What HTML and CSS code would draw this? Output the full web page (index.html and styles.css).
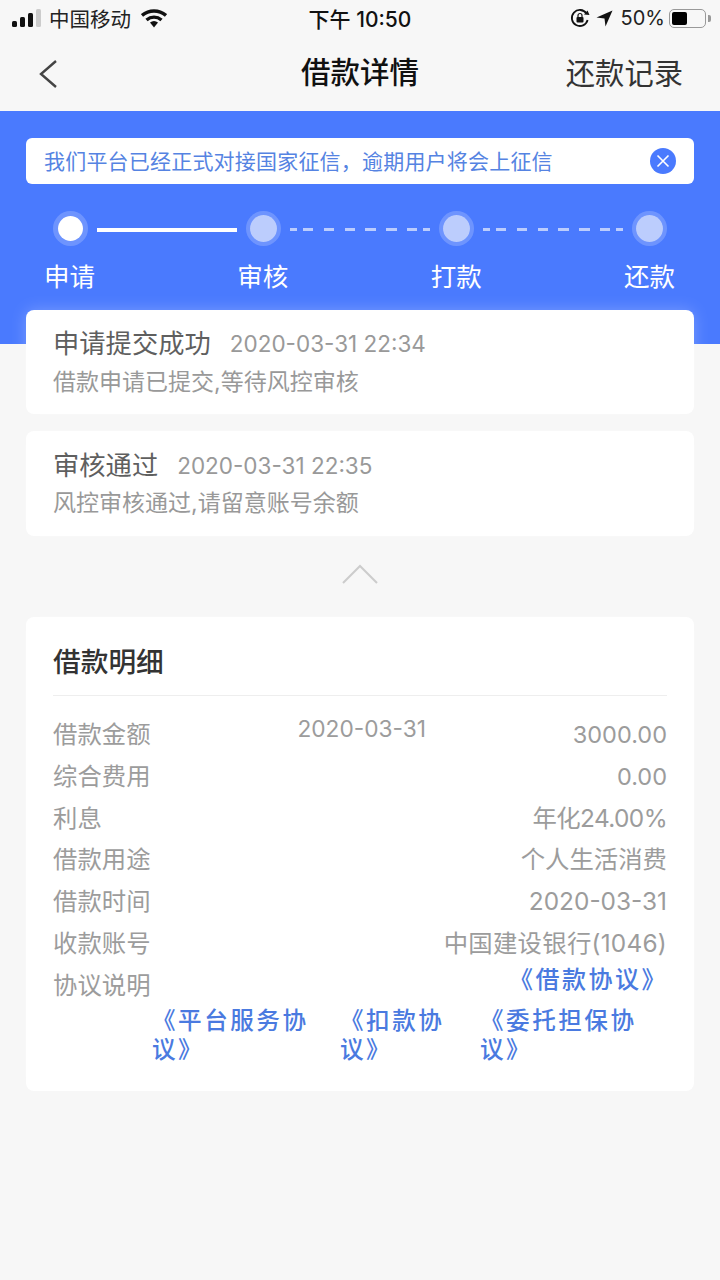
FILE: index.html
```html
<!DOCTYPE html>
<html lang="zh-CN">
<head>
    <meta charset="UTF-8">
    <meta name="viewport" content="width=device-width, initial-scale=1.0">
    <title>借款详情</title>
    <link rel="stylesheet" href="styles.css">
</head>
<body>
    <div class="status-bar">
        <div class="status-left">
            <svg class="signal" width="30" height="18" viewBox="0 0 30 18">
                <rect x="0" y="12" width="5" height="6" rx="1.5" fill="#111"/>
                <rect x="8" y="8" width="5" height="10" rx="1.5" fill="#111"/>
                <rect x="16" y="4" width="5" height="14" rx="1.5" fill="#111"/>
                <rect x="24" y="0" width="5" height="18" rx="1.5" fill="#ccc"/>
            </svg>
            <span class="carrier">中国移动</span>
            <svg class="wifi" width="26" height="19" viewBox="0 0 26 19">
                <path d="M1 6.5 C8 0.5 18 0.5 25 6.5" fill="none" stroke="#111" stroke-width="3.4"/>
                <path d="M5.5 11 C10 7.2 16 7.2 20.5 11" fill="none" stroke="#111" stroke-width="3.4"/>
                <path d="M9 13.6 C11.5 11.6 14.5 11.6 17 13.6 L13 18.5 Z" fill="#111"/>
            </svg>
        </div>
        <div class="status-time">下午 10:50</div>
        <div class="status-right">
            <svg width="20" height="20" viewBox="0 0 20 20">
                <path d="M16.5 5.5 A8 8 0 1 0 17.6 12" fill="none" stroke="#111" stroke-width="1.8"/>
                <path d="M14 6.5 L19.5 7 L17.5 2.5 Z" fill="#111"/>
                <rect x="6.5" y="9" width="7" height="5.5" rx="1" fill="#111"/>
                <path d="M8 9 V7.5 A2 2 0 0 1 12 7.5 V9" fill="none" stroke="#111" stroke-width="1.2"/>
            </svg>
            <svg class="arrow" width="17" height="17" viewBox="0 0 17 17">
                <path d="M16.5 0.5 L0.5 7.5 L8.5 8.5 L9.5 16.5 Z" fill="#111"/>
            </svg>
            <span class="battery-text">50%</span>
            <div class="battery"><div class="battery-fill"></div></div>
            <div class="battery-cap"></div>
        </div>
    </div>

    <div class="nav">
        <svg class="back" width="20" height="30" viewBox="0 0 20 30">
            <path d="M18 2 L3 15 L18 28" fill="none" stroke="#444" stroke-width="2.4"/>
        </svg>
        <h1>借款详情</h1>
        <span class="nav-link">还款记录</span>
    </div>

    <div class="main">
        <div class="notice">
            <span class="notice-text">我们平台已经正式对接国家征信，逾期用户将会上征信</span>
            <svg width="26" height="26" viewBox="0 0 26 26">
                <circle cx="13" cy="13" r="13" fill="#4a7afe"/>
                <path d="M7.5 7.5 L18.5 18.5 M18.5 7.5 L7.5 18.5" stroke="#fff" stroke-width="1.6"/>
            </svg>
        </div>

        <div class="steps">
            <div class="step-dot active"></div>
            <div class="step-line solid"></div>
            <div class="step-dot"></div>
            <div class="step-line"></div>
            <div class="step-dot"></div>
            <div class="step-line"></div>
            <div class="step-dot"></div>
        </div>
        <div class="step-labels">
            <span>申请</span>
            <span>审核</span>
            <span>打款</span>
            <span>还款</span>
        </div>

        <div class="card record">
            <div class="record-head">
                <span class="record-title">申请提交成功</span>
                <span class="record-time">2020-03-31 22:34</span>
            </div>
            <div class="record-desc">借款申请已提交,等待风控审核</div>
        </div>
        <div class="card record">
            <div class="record-head">
                <span class="record-title">审核通过</span>
                <span class="record-time">2020-03-31 22:35</span>
            </div>
            <div class="record-desc">风控审核通过,请留意账号余额</div>
        </div>

        <div class="collapse">
            <svg width="36" height="20" viewBox="0 0 36 20">
                <path d="M1 19 L18 2 L35 19" fill="none" stroke="#ccc" stroke-width="2"/>
            </svg>
        </div>

        <div class="card detail">
            <h2>借款明细</h2>
            <div class="detail-rows">
                <div class="row"><span>借款金额</span><span class="row-date">2020-03-31</span><span class="amount">3000.00</span></div>
                <div class="row"><span>综合费用</span><span class="amount">0.00</span></div>
                <div class="row"><span>利息</span><span class="rate">年化24.00%</span></div>
                <div class="row"><span>借款用途</span><span>个人生活消费</span></div>
                <div class="row"><span>借款时间</span><span>2020-03-31</span></div>
                <div class="row"><span>收款账号</span><span class="bank">中国建设银行(1046)</span></div>
                <div class="row"><span>协议说明</span><span class="link link-main">《借款协议》</span></div>
            </div>
            <div class="links">
                <span class="link link-a">《平台服务协议》</span>
                <span class="link link-b">《扣款协议》</span>
                <span class="link link-c">《委托担保协议》</span>
            </div>
        </div>
    </div>
</body>
</html>
```

FILE: styles.css
```css
* {
    box-sizing: border-box;
}
body {
    margin: 0;
    background-color: #f7f7f7;
    color: #333;
    font-family: Inter, "Noto Sans CJK SC", sans-serif;
}
.status-bar {
    display: grid;
    grid-template-columns: 1fr auto 1fr;
    align-items: center;
    height: 37px;
    padding: 0 9px 1px 12px;
    font-size: 20.5px;
    color: #222;
}
.status-left {
    display: flex;
    align-items: center;
    gap: 7px;
}
.wifi {
    margin-left: 3px;
}
.status-time {
    margin-right: 3px;
    font-size: 21px;
    font-weight: 500;
    color: #111;
}
.status-right {
    display: flex;
    align-items: center;
    justify-content: flex-end;
    gap: 5px;
}
.arrow {
    margin-left: 1px;
}
.battery-text {
    font-size: 20px;
    margin-left: 3px;
}
.battery {
    width: 37px;
    height: 19px;
    padding: 2px;
    margin-left: -1px;
    border: 1.5px solid #999;
    border-radius: 5px;
}
.battery-fill {
    width: 15px;
    height: 100%;
    background-color: #000;
    border-radius: 2px;
}
.battery-cap {
    width: 3px;
    height: 7px;
    margin-left: -3px;
    background-color: #999;
    border-radius: 0 2px 2px 0;
}
.nav {
    display: flex;
    align-items: center;
    justify-content: space-between;
    position: relative;
    height: 74px;
    padding: 0 37px 0 38px;
}
.nav h1 {
    position: absolute;
    top: 0;
    left: 0;
    right: 0;
    margin: 0;
    text-align: center;
    font-size: 29.5px;
    font-weight: 500;
    line-height: 70px;
    color: #111;
}
.nav-link {
    margin-bottom: 6px;
    font-size: 29.3px;
    color: #333;
}
.main {
    padding: 27px 26px 0;
    background: linear-gradient(#4a7afe, #4a7afe) no-repeat top / 100% 233px;
}
.notice {
    display: flex;
    align-items: center;
    justify-content: space-between;
    height: 46px;
    padding: 0 18px 0 18px;
    background-color: #fff;
    border-radius: 6px;
    color: #5583e2;
    font-size: 21px;
    letter-spacing: 0.2px;
}
.notice-text {
    margin-bottom: 3px;
}
.steps {
    display: flex;
    align-items: center;
    margin-top: 27px;
    padding: 0 27px;
}
.step-dot {
    flex: none;
    width: 35px;
    height: 35px;
    border: 4px solid rgba(255, 255, 255, 0.2);
    border-radius: 50%;
    background-color: #bccdfd;
    background-clip: padding-box;
}
.step-dot.active {
    border-width: 5px;
    background-color: #fff;
}
.step-line {
    flex: 1;
    height: 3px;
    margin: 2px 9px 0;
    padding: 0 13px;
    background:
        linear-gradient(#bccdfd, #bccdfd) left / 7px 100% no-repeat,
        linear-gradient(#bccdfd, #bccdfd) right / 7px 100% no-repeat;
}
.step-line::before {
    content: "";
    display: block;
    height: 100%;
    background: repeating-linear-gradient(to right, #bccdfd 0, #bccdfd 10.5px, transparent 10.5px, transparent 20.75px);
}
.step-line.solid {
    height: 4px;
    background: #fff;
}
.step-line.solid::before {
    display: none;
}
.step-labels {
    display: flex;
    justify-content: space-between;
    margin-top: 12px;
    padding: 0 19px 0 18px;
    color: #fff;
    font-size: 25.5px;
    line-height: 37px;
}
.card {
    background-color: #fff;
    border-radius: 8px;
    box-shadow: 0 0 16px rgba(255, 255, 255, 0.25);
}
.record {
    height: 105px;
    margin-top: 17px;
    padding: 16px 27px 0;
}
.step-labels + .record {
    margin-top: 15px;
    height: 104px;
    padding-top: 15px;
}
.record-head {
    display: flex;
    align-items: center;
    gap: 19px;
    line-height: 38px;
}
.record-title {
    font-size: 26.3px;
    color: #5f5f5f;
}
.record-time {
    font-size: 22.5px;
    color: #999;
}
.record-desc {
    margin-top: 2px;
    font-size: 23px;
    line-height: 34px;
    color: #999;
}
.record + .record .record-desc {
    margin-top: 1px;
}
.collapse {
    display: flex;
    justify-content: center;
    height: 81px;
    padding-top: 28px;
}
.detail {
    height: 474px;
    padding: 0 27px;
}
.detail h2 {
    margin: 0;
    height: 79px;
    border-bottom: 1px solid #eee;
    font-size: 27.7px;
    font-weight: 500;
    line-height: 91px;
    color: #333;
}
.detail-rows {
    margin-top: 18.4px;
}
.row {
    display: flex;
    justify-content: space-between;
    height: 41.7px;
    font-size: 24.4px;
    line-height: 41px;
    color: #9c9c9c;
}
.row-date {
    margin-top: -6px;
    font-size: 22.7px;
}
.amount {
    font-size: 23.5px;
}
.rate {
    letter-spacing: -0.6px;
}
.bank {
    letter-spacing: 0.25px;
}
.link {
    color: #4a7ae0;
    font-weight: 500;
    letter-spacing: 2.5px;
}
.link-main {
    margin-top: -6px;
    margin-right: -1px;
    font-size: 24px;
}
.links {
    display: flex;
    gap: 28px;
    padding-left: 99px;
    font-size: 23.6px;
    line-height: 29px;
}
.link-a {
    width: 160px;
}
.link-b {
    width: 112px;
}
.link-c {
    width: 160px;
}
```
